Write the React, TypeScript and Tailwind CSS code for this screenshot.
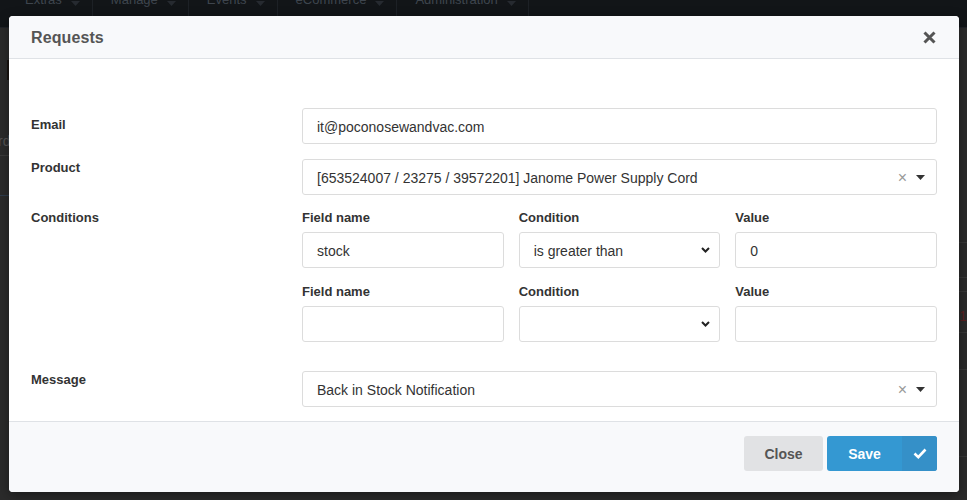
import React from 'react';

const NAV = ['Extras', 'Manage', 'Events', 'eCommerce', 'Administration'];

function Caret({ className = '' }: { className?: string }) {
  return (
    <svg width="9" height="5" viewBox="0 0 9 5" className={className}>
      <path d="M0 0h9L4.5 5z" fill="currentColor" />
    </svg>
  );
}

function Chevron() {
  return (
    <svg width="9" height="6" viewBox="0 0 9 6" className="text-[#222]">
      <path d="M1 1l3.5 3.5L8 1" fill="none" stroke="currentColor" strokeWidth="2" />
    </svg>
  );
}

function TextInput({ value = '' }: { value?: string }) {
  return (
    <div className="h-[36px] w-full rounded-[3px] border border-[#dcdcdc] bg-white px-[14px] pt-[2px] flex items-center text-[14px] text-[#333]">
      {value}
    </div>
  );
}

function NativeSelect({ value = '' }: { value?: string }) {
  return (
    <div className="h-[36px] w-full rounded-[3px] border border-[#dcdcdc] bg-white pl-[14px] pr-[9px] flex items-center justify-between text-[14px] text-[#333]">
      <span className="pt-[2px]">{value}</span>
      <Chevron />
    </div>
  );
}

function Select2({ value }: { value: string }) {
  return (
    <div className="h-[36px] w-full rounded-[3px] border border-[#dcdcdc] bg-white pl-[14px] pr-[11px] flex items-center text-[14px] text-[#333]">
      <span className="flex-1 truncate pt-[2px]">{value}</span>
      <span className="text-[#999] text-[16px] leading-none mr-[9px] pt-[1px]">×</span>
      <Caret className="text-[#333]" />
    </div>
  );
}

function Label({ children, className = '' }: { children: React.ReactNode; className?: string }) {
  return <div className={`w-[271px] shrink-0 text-[13px] leading-[18px] font-bold text-[#333] ${className}`}>{children}</div>;
}

function ConditionRow({ field, cond, value, first }: { field?: string; cond?: string; value?: string; first?: boolean }) {
  return (
    <div className={`grid grid-cols-3 gap-x-[15px] ${first ? '' : 'mt-[15px]'}`}>
      {[
        ['Field name', <TextInput value={field} />],
        ['Condition', <NativeSelect value={cond} />],
        ['Value', <TextInput value={value} />],
      ].map(([label, el], i) => (
        <div key={i} className="flex flex-col gap-[5px]">
          <div className="text-[13px] leading-[18px] font-bold text-[#333]">{label}</div>
          {el}
        </div>
      ))}
    </div>
  );
}

export default function App() {
  return (
    <div className="relative h-[500px] w-full overflow-hidden bg-[#2b2b2b] font-['Liberation_Sans',Arial,sans-serif]">
      {/* page underneath the overlay */}
      <div className="h-[28px] bg-[#121518] flex pl-[7px] overflow-hidden border-b border-[#202328]">
        {NAV.map((n) => (
          <div key={n} className="flex items-start pl-[18px] pr-[12px] border-r border-[#1d2126] text-[#3e454e] text-[13px]">
            <span className="leading-[16px] -mt-[8px]">{n}</span>
            <Caret className="ml-[9px] mt-[1px] text-[#262a30]" />
          </div>
        ))}
      </div>
      <div className="flex h-[472px]">
        <div className="w-[30px] flex flex-col">
          <div className="h-[128px] border-b border-[#3a3a3a] relative">
            <div className="absolute left-[7px] top-[32px] h-[20px] w-[3px] bg-[#1a1410]" />
            <span className="absolute -left-[2px] top-[103px] text-[14px] text-[#555]">rd</span>
          </div>
          <div className="h-[40px] border-b border-[#2f3d4d]" />
        </div>
        <div className="flex-1" />
        <div className="w-[30px] flex flex-col">
          <div className="h-[215px] border-b border-[#383838]" />
          <div className="h-[35px] border-b border-[#383838]" />
          <div className="h-[14px] border-b border-[#383838]" />
          <div className="h-[41px] border-b border-[#383838] relative">
            <span className="absolute left-[22px] top-[14px] text-[14px] text-[#5a2020]">1</span>
          </div>
          <div className="h-[37px] border-b border-[#383838]" />
          <div className="h-[87px] border-b border-[#383838]" />
        </div>
      </div>

      {/* modal */}
      <div className="absolute left-[9px] top-[16px] w-[950px] rounded-[4px] overflow-hidden bg-white shadow-[0_3px_12px_rgba(0,0,0,0.4)]">
        <div className="h-[43px] bg-[#f8f9fb] border-b border-[#dfe2e6] px-[22px] flex items-center justify-between">
          <span className="text-[16px] font-bold text-[#555] tracking-[0.1px] pt-[2px]">Requests</span>
          <svg width="13" height="13" viewBox="0 0 13 13" className="mr-[1px]">
            <path d="M1.5 1.5l10 10M11.5 1.5l-10 10" stroke="#555" strokeWidth="3" />
          </svg>
        </div>

        <div className="px-[22px] pt-[49px] pb-[14px]">
          <div className="flex">
            <Label className="pt-[8px]">Email</Label>
            <div className="flex-1"><TextInput value="it@poconosewandvac.com" /></div>
          </div>
          <div className="flex mt-[15px]">
            <Label>Product</Label>
            <div className="flex-1"><Select2 value="[653524007 / 23275 / 39572201] Janome Power Supply Cord" /></div>
          </div>
          <div className="flex mt-[14px]">
            <Label>Conditions</Label>
            <div className="flex-1">
              <ConditionRow first field="stock" cond="is greater than" value="0" />
              <ConditionRow />
            </div>
          </div>
          <div className="flex mt-[29px]">
            <Label>Message</Label>
            <div className="flex-1"><Select2 value="Back in Stock Notification" /></div>
          </div>
        </div>

        <div className="h-[71px] bg-[#f8f9fb] border-t border-[#dfe2e6] px-[22px] pt-[14px] flex justify-end items-start gap-[4px]">
          <button className="h-[35px] w-[79px] rounded-[3px] bg-[#e1e2e4] text-[14px] font-bold text-[#555] pt-[2px]">Close</button>
          <button className="h-[35px] w-[110px] rounded-[3px] bg-[#3498d2] flex overflow-hidden text-white">
            <span className="flex-1 h-full flex items-center justify-center text-[14px] font-bold pt-[2px]">Save</span>
            <span className="w-[35px] h-full bg-[#3590c8] flex items-center justify-center">
              <svg width="14" height="11" viewBox="0 0 14 11">
                <path d="M1.5 5.5l3.8 3.6L12.5 1.5" fill="none" stroke="#fff" strokeWidth="2.6" />
              </svg>
            </span>
          </button>
        </div>
      </div>
    </div>
  );
}
